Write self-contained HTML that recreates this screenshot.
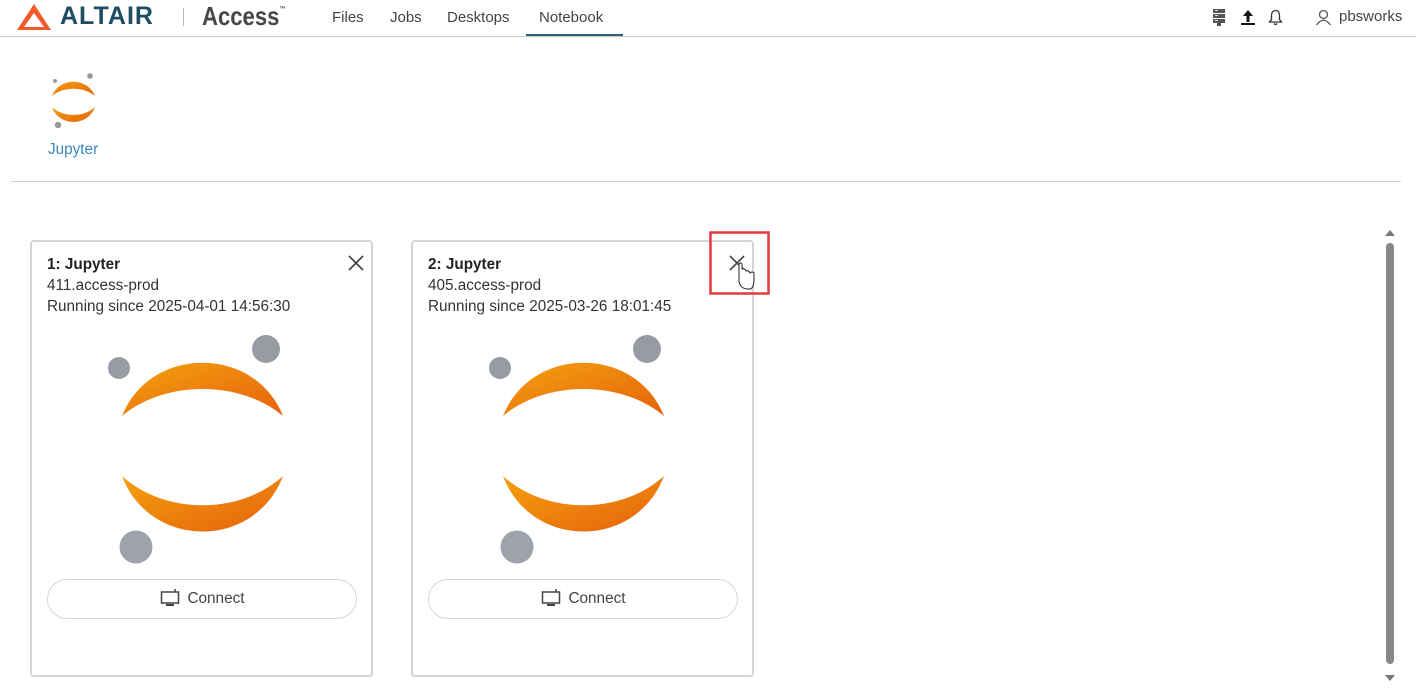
<!DOCTYPE html>
<html><head><meta charset="utf-8"><style>
*{margin:0;padding:0;box-sizing:border-box}
body{width:1416px;height:700px;background:#fff;font-family:"Liberation Sans",sans-serif;color:#333;position:relative;overflow:hidden}
.abs{position:absolute}
.nav{position:absolute;top:9px;font-size:15px;color:#444}
.card{position:absolute;top:240px;width:343px;height:437px;border:2px solid #d4d4d4;border-radius:4px;background:#fff}
.card .t{position:absolute;left:15px;top:12px;font-size:15.3px;line-height:21px;color:#333}
.card .t b{color:#222}
.btn{position:absolute;left:15px;top:337px;width:310px;height:40px;border:1px solid #d6d6d6;border-radius:20px;font-size:15.3px;color:#444;text-align:center;line-height:38px}
.btn svg{vertical-align:-4px;margin-right:8px}
.x{position:absolute;right:6px;top:12px}
</style></head><body>
<svg class="abs" style="left:16px;top:3px" width="36" height="28" viewBox="0 0 36 28"><path d="M18 1 L35 27 L1 27 Z M18 10 L8 24 L28 24 Z" fill="#f15a29" fill-rule="evenodd"/></svg>
<div class="abs" style="left:60px;top:2px;font-size:25px;font-weight:bold;color:#1d4d63;letter-spacing:1px">ALTAIR</div>
<div class="abs" style="left:183px;top:8px;width:1px;height:18px;background:#bbb"></div>
<div class="abs" style="left:202px;top:1px;font-size:26px;font-weight:bold;color:#474747;transform:scaleX(0.85);transform-origin:left">Access<sup style="font-size:7px;vertical-align:14px">™</sup></div>
<div class="nav" style="left:332px">Files</div>
<div class="nav" style="left:390px">Jobs</div>
<div class="nav" style="left:447px">Desktops</div>
<div class="nav" style="left:539px">Notebook</div>
<div class="abs" style="left:0;top:36px;width:1416px;height:1px;background:#c8c8c8"></div>
<div class="abs" style="left:526px;top:34px;width:97px;height:2px;background:#2d5f7a"></div>
<svg class="abs" style="left:1212px;top:9px" width="14" height="17" viewBox="0 0 14 17"><rect x="1" y="0" width="12" height="4" fill="#555"/><rect x="1" y="5" width="12" height="4" fill="#555"/><rect x="1" y="10" width="12" height="4" fill="#555"/><rect x="5" y="14" width="4" height="3" fill="#555"/><rect x="3" y="1" width="3" height="1" fill="#ddd"/><rect x="3" y="6" width="3" height="1" fill="#ddd"/><rect x="3" y="11" width="3" height="1" fill="#ddd"/></svg>
<svg class="abs" style="left:1240px;top:9px" width="16" height="17" viewBox="0 0 16 17"><path d="M8 1 L13 7 L9.5 7 L9.5 13 L6.5 13 L6.5 7 L3 7 Z" fill="#111"/><rect x="1" y="14" width="14" height="2" fill="#111"/></svg>
<svg class="abs" style="left:1268px;top:9px" width="15" height="17" viewBox="0 0 15 17"><path d="M7.5 1.5 C4.5 1.5 3.5 4 3.5 6.5 L3.5 10.5 L1.5 13 L13.5 13 L11.5 10.5 L11.5 6.5 C11.5 4 10.5 1.5 7.5 1.5 Z M6 14.5 Q7.5 16.5 9 14.5" fill="none" stroke="#333" stroke-width="1.3"/></svg>
<svg class="abs" style="left:1315px;top:9px" width="17" height="17" viewBox="0 0 17 17"><circle cx="8.5" cy="5.5" r="4" fill="none" stroke="#555" stroke-width="1.3"/><path d="M1.5 16 Q8.5 6.5 15.5 16" fill="none" stroke="#555" stroke-width="1.3"/></svg>
<div class="abs" style="left:1339px;top:8px;font-size:15px;color:#444">pbsworks</div>
<svg class="abs" style="left:0;top:0" width="800" height="700" viewBox="0 0 800 700">
<defs><linearGradient id="g1" x1="0" y1="0" x2="1" y2="1"><stop offset="0" stop-color="#f5a00f"/><stop offset="1" stop-color="#e5620b"/></linearGradient>
<path id="up" d="M122 416 C150 345 255 345 283 416 C240 380 165 380 122 416Z"/>
<path id="dn" d="M122 476 C150 550 255 550 283 476 C240 515 165 515 122 476Z"/></defs>
<use href="#up" fill="url(#g1)" transform="translate(19.4,-15.1) scale(0.267)"/>
<use href="#dn" fill="url(#g1)" transform="translate(19.4,-20) scale(0.267)"/>
<circle cx="55" cy="81" r="2" fill="#999"/><circle cx="90" cy="76" r="2.8" fill="#999"/><circle cx="58" cy="125" r="3.2" fill="#999"/>
</svg>
<div class="abs" style="left:48px;top:141px;font-size:15.3px;color:#3b86c0">Jupyter</div>
<div class="abs" style="left:11px;top:181px;width:1390px;height:1px;background:#cfcfcf"></div>
<div class="card" style="left:30px">
<div class="t"><b>1: Jupyter</b><br>411.access-prod<br>Running since 2025-04-01 14:56:30</div>
<svg class="x" width="18" height="18" viewBox="0 0 18 18"><path d="M2 2 L16 16 M16 2 L2 16" stroke="#444" stroke-width="1.6"/></svg>
<div class="btn"><svg width="20" height="18" viewBox="0 0 20 18"><rect x="1.5" y="3" width="17" height="11" fill="none" stroke="#444" stroke-width="1.5"/><rect x="6" y="15" width="8" height="2" fill="#444"/><path d="M15 0 L15 3" stroke="#444" stroke-width="1.5"/></svg>Connect</div>
</div>
<div class="card" style="left:411px">
<div class="t"><b>2: Jupyter</b><br>405.access-prod<br>Running since 2025-03-26 18:01:45</div>
<svg class="x" width="18" height="18" viewBox="0 0 18 18"><path d="M2 2 L16 16 M16 2 L2 16" stroke="#444" stroke-width="1.6"/></svg>
<div class="btn"><svg width="20" height="18" viewBox="0 0 20 18"><rect x="1.5" y="3" width="17" height="11" fill="none" stroke="#444" stroke-width="1.5"/><rect x="6" y="15" width="8" height="2" fill="#444"/><path d="M15 0 L15 3" stroke="#444" stroke-width="1.5"/></svg>Connect</div>
</div>
<svg class="abs" style="left:0;top:0" width="800" height="700" viewBox="0 0 800 700">
<defs><linearGradient id="g2" x1="0" y1="0" x2="1" y2="1"><stop offset="0" stop-color="#f5a00f"/><stop offset="1" stop-color="#e5620b"/></linearGradient></defs>
<g id="j">
<path d="M122 416 C150 345 255 345 283 416 C240 380 165 380 122 416Z" fill="url(#g2)"/>
<path d="M122 476 C150 550 255 550 283 476 C240 515 165 515 122 476Z" fill="url(#g2)"/>
<circle cx="119" cy="368" r="11" fill="#989ca2"/><circle cx="266" cy="349" r="14" fill="#989ca2"/><circle cx="136" cy="547" r="16.5" fill="#9ea3aa"/>
</g>
<use href="#j" transform="translate(381,0)"/>
<rect x="710.5" y="232.5" width="58" height="61" fill="none" stroke="#e8383d" stroke-width="2.5"/>
<path d="M739 264 L739 282 Q741 289 748 289 L751 289 Q754 286 754 280 L754 273 Q752 271 750 273 Q749 270 746 271 Q745 268 742 269 L742 264 Q740.5 262 739 264Z" fill="#fff" stroke="#222" stroke-width="1"/>
</svg>
<svg class="abs" style="left:1382px;top:224px" width="16" height="466" viewBox="0 0 16 466"><path d="M3 12 L8 6 L13 12Z" fill="#777"/><rect x="4" y="19" width="8" height="421" rx="4" fill="#888"/><path d="M3 451 L8 457 L13 451Z" fill="#777"/></svg>
</body></html>
